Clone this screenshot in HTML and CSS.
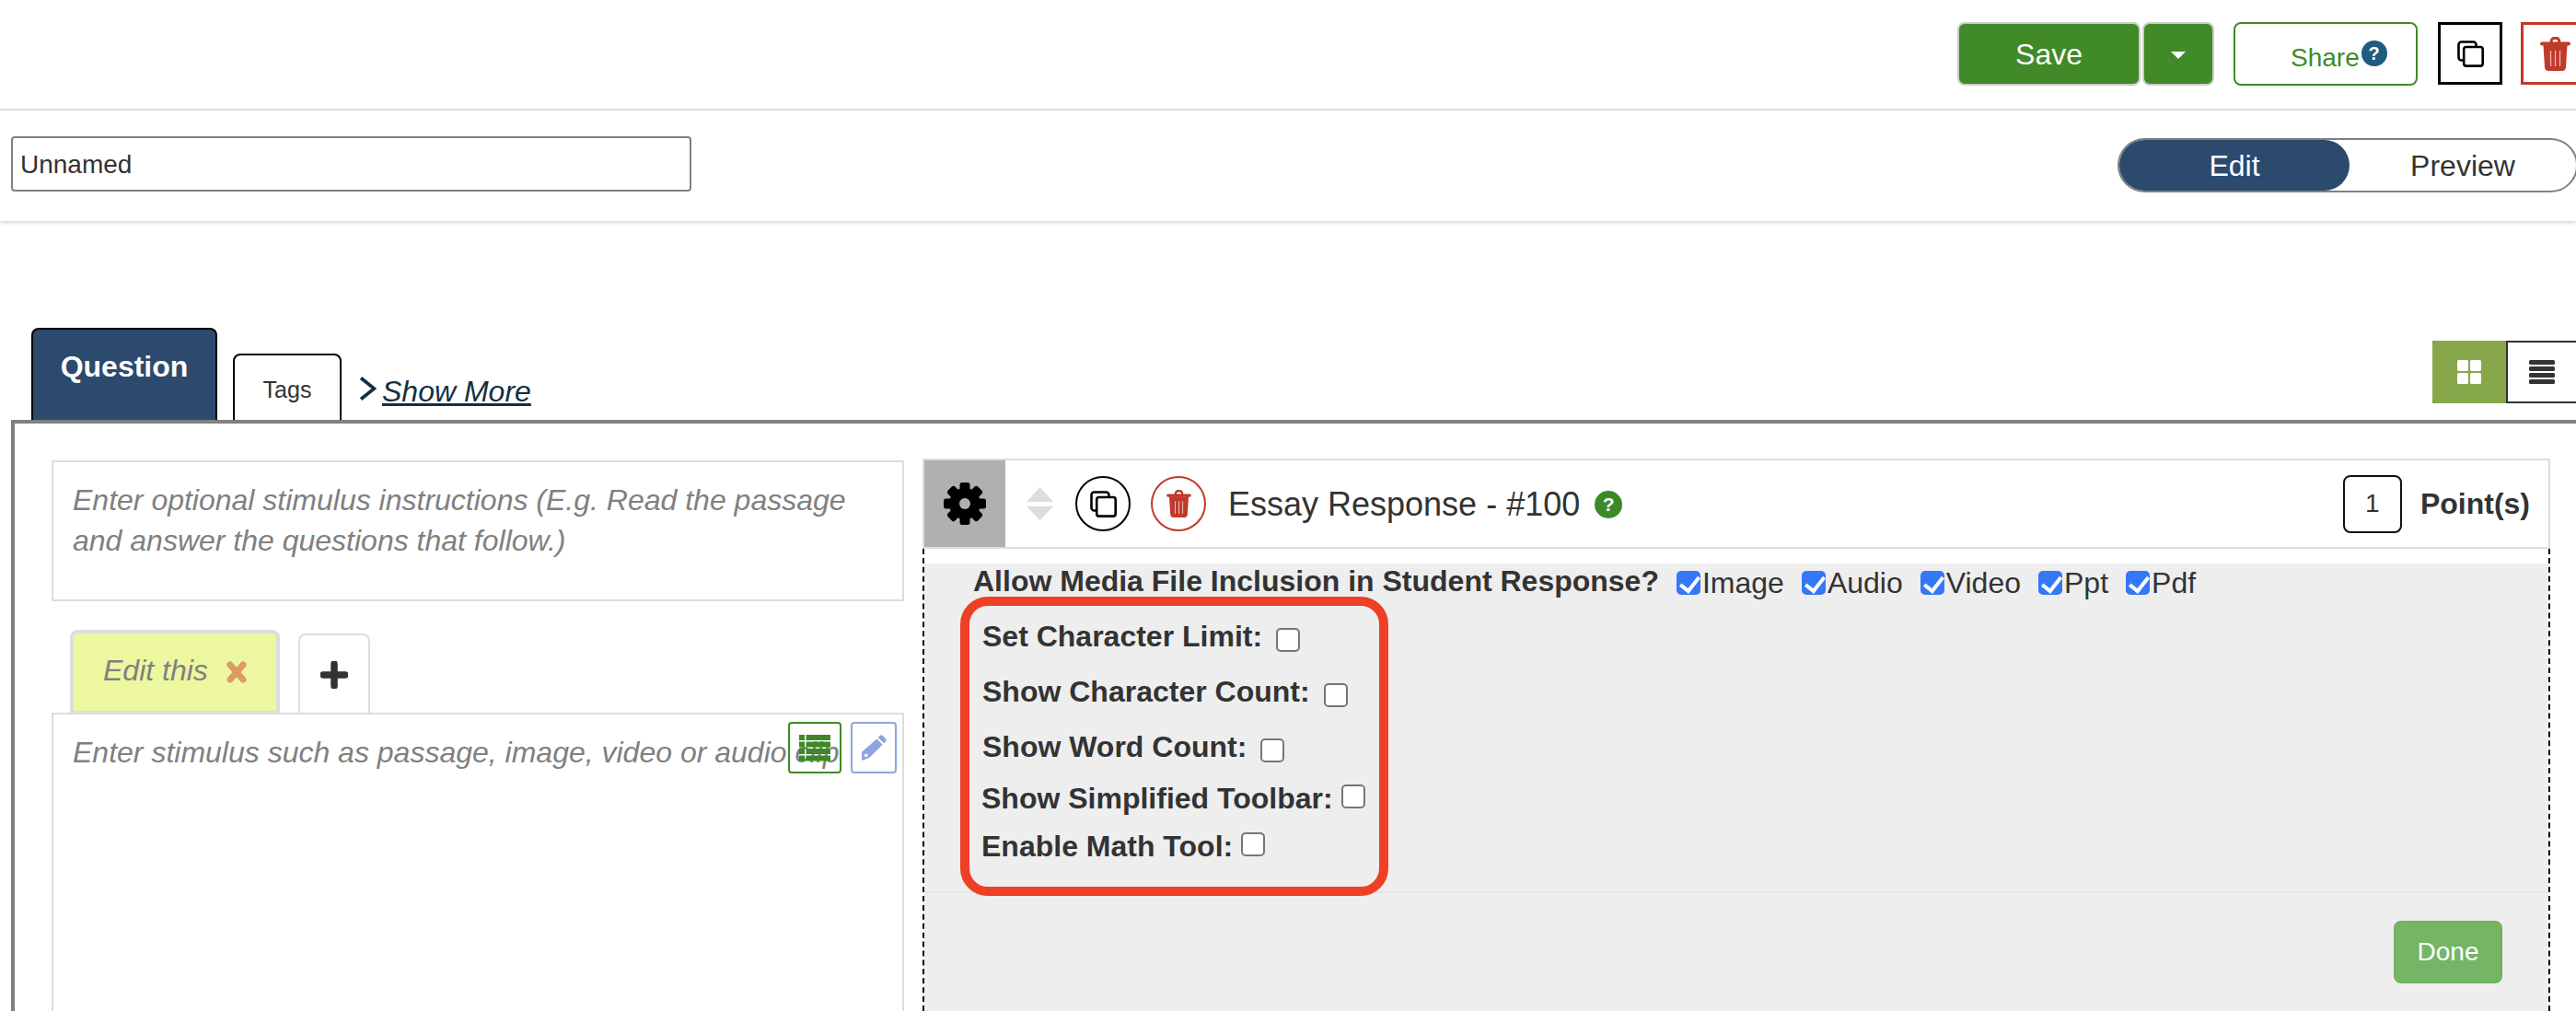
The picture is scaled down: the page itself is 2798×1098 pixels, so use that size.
FILE: index.html
```html
<!DOCTYPE html>
<html lang="en">
<head>
<meta charset="utf-8">
<title>Essay Response</title>
<link rel="stylesheet" href="styles.css">
</head>
<body>
<svg class="defs" width="0" height="0" aria-hidden="true">
  <symbol id="i-copy" viewBox="0 0 29 29">
    <path d="M7 21.500H4.500a3 3 0 0 1-3-3V4.500a3 3 0 0 1 3-3h13a3 3 0 0 1 3 3V7" fill="none" stroke="currentColor" stroke-width="2.600"/>
    <rect x="7.200" y="7" width="20.500" height="20.600" rx="2.600" fill="none" stroke="currentColor" stroke-width="2.600"/>
  </symbol>
  <symbol id="i-trash" viewBox="0 0 33 37">
    <path fill="currentColor" fill-rule="evenodd" d="M10.500 5.500C10.800 2 12.500 0 15 0h3c2.500 0 4.200 2 4.500 5.500h8.500a2 2 0 0 1 0 4H2a2 2 0 0 1 0-4zM13.500 5.500h6C19.300 3.800 18.800 3 18 3h-3c-.8 0-1.300.8-1.500 2.500z"/>
    <path fill="currentColor" d="M3.500 9h26L28 33c-.2 2.500-1.800 4-4 4H9c-2.200 0-3.800-1.500-4-4z"/>
    <path fill="#fff" fill-opacity=".65" d="M10.900 15h1.300v17h-1.300zM15.900 15h1.300v17h-1.300zM20.900 15h1.300v17h-1.300z"/>
  </symbol>
</svg>

<header class="toolbar">
  <button class="btn-save">Save</button>
  <button class="btn-caret"><span class="caret"></span></button>
  <button class="btn-share">Share<span class="help help-blue">?</span></button>
  <button class="btn-square btn-copy"><svg class="icon-copy"><use href="#i-copy"/></svg></button>
  <button class="btn-square btn-trash"><svg class="icon-trash-lg"><use href="#i-trash"/></svg></button>
</header>

<section class="namebar">
  <input class="name-input" type="text" value="Unnamed">
  <div class="mode-toggle">
    <span class="mode mode-on">Edit</span>
    <span class="mode">Preview</span>
  </div>
</section>

<nav class="tabbar">
  <div class="tab tab-question">Question</div>
  <div class="tab tab-tags">Tags</div>
  <svg class="chevron" viewBox="0 0 19 26"><path d="M2 1.500 16.500 13 2 24.500" fill="none" stroke="#12303f" stroke-width="3.600"/></svg>
  <a class="show-more" href="#">Show More</a>
  <div class="view-toggle">
    <button class="view view-grid">
      <svg class="icon-grid" viewBox="0 0 26 26"><rect width="12" height="12" rx="1.500"/><rect x="14" width="12" height="12" rx="1.500"/><rect y="14" width="12" height="12" rx="1.500"/><rect x="14" y="14" width="12" height="12" rx="1.500"/></svg>
    </button>
    <button class="view view-list">
      <svg class="icon-list" viewBox="0 0 28 26"><rect width="28" height="5" rx="1.500"/><rect y="7" width="28" height="5" rx="1.500"/><rect y="14" width="28" height="5" rx="1.500"/><rect y="21" width="28" height="5" rx="1.500"/></svg>
    </button>
  </div>
</nav>

<main class="frame">
  <div class="stimulus">
    <div class="box box-instructions">Enter optional stimulus instructions (E.g. Read the passage and answer the questions that follow.)</div>
    <div class="stim-tabs">
      <div class="stim-tab">Edit this
        <svg class="icon-x" viewBox="0 0 24 24"><path d="M5 4l14 16M19 4 5 20" fill="none" stroke="#dd9a66" stroke-width="7" stroke-linecap="round"/></svg>
      </div>
      <div class="stim-add">
        <svg class="icon-plus" viewBox="0 0 30 30"><path d="M15 3v24M3 15h24" fill="none" stroke="#333" stroke-width="7.500" stroke-linecap="round"/></svg>
      </div>
    </div>
    <div class="box box-stimulus">
      Enter stimulus such as passage, image, video or audio clip
      <button class="overlay-btn overlay-table">
        <svg class="icon-table" viewBox="0 0 34 29">
          <rect width="6" height="6"/><rect x="7.500" width="26.500" height="6"/>
          <rect y="7.500" width="6" height="6"/><rect x="7.500" y="7.500" width="26.500" height="6"/>
          <rect y="15" width="6" height="6"/><rect x="7.500" y="15" width="26.500" height="6"/>
          <rect y="22.500" width="6" height="6"/><rect x="7.500" y="22.500" width="26.500" height="6"/>
        </svg>
      </button>
      <button class="overlay-btn overlay-pencil">
        <svg class="icon-pencil" viewBox="0 0 28 28"><path d="M20.500 1.200a2.500 2.500 0 0 1 3.500 0l2.800 2.800a2.500 2.500 0 0 1 0 3.500L25 9.300 18.700 3zM17.300 4.400l6.300 6.300L9.500 24.800 1 28V18.700zM4.500 21a1.500 1.500 0 1 0 2.500 2.500A1.500 1.500 0 0 0 4.500 21z" fill-rule="evenodd"/></svg>
      </button>
    </div>
  </div>

  <div class="question">
    <div class="q-head">
      <div class="q-gear">
        <svg class="icon-gear" viewBox="0 0 46 46">
          <g>
            <rect x="17.500" y="0" width="11" height="46" rx="2.500"/>
            <rect x="17.500" y="0" width="11" height="46" rx="2.500" transform="rotate(45 23 23)"/>
            <rect x="17.500" y="0" width="11" height="46" rx="2.500" transform="rotate(90 23 23)"/>
            <rect x="17.500" y="0" width="11" height="46" rx="2.500" transform="rotate(135 23 23)"/>
            <circle cx="23" cy="23" r="17"/>
          </g>
          <circle class="gear-hole" cx="23" cy="23" r="6"/>
        </svg>
      </div>
      <svg class="icon-sort" viewBox="0 0 29 36"><path d="M14.500 0 29 16H0zM0 21h29L14.500 36z"/></svg>
      <span class="round round-copy"><svg class="icon-copy"><use href="#i-copy"/></svg></span>
      <span class="round round-trash"><svg class="icon-trash"><use href="#i-trash"/></svg></span>
      <h1 class="q-title">Essay Response - #100</h1>
      <span class="help help-green">?</span>
      <div class="points-box">1</div>
      <strong class="points-label">Point(s)</strong>
    </div>
    <div class="settings">
      <div class="settings-body">
        <div class="media-row">
          <strong class="media-title">Allow Media File Inclusion in Student Response?</strong>
          <label class="media"><input class="check" type="checkbox" checked>Image</label>
          <label class="media"><input class="check" type="checkbox" checked>Audio</label>
          <label class="media"><input class="check" type="checkbox" checked>Video</label>
          <label class="media"><input class="check" type="checkbox" checked>Ppt</label>
          <label class="media"><input class="check" type="checkbox" checked>Pdf</label>
        </div>
        <div class="options">
          <label class="opt"><b>Set Character Limit:</b><input class="check check-low" type="checkbox"></label>
          <label class="opt"><b>Show Character Count:</b><input class="check check-low" type="checkbox"></label>
          <label class="opt"><b>Show Word Count:</b><input class="check check-low" type="checkbox"></label>
          <label class="opt opt-tight"><b>Show Simplified Toolbar:</b><input class="check check-high" type="checkbox"></label>
          <label class="opt opt-tight"><b>Enable Math Tool:</b><input class="check check-high" type="checkbox"></label>
        </div>
        <div class="footer"><button class="btn-done">Done</button></div>
        <div class="highlight"></div>
      </div>
    </div>
  </div>
</main>
</body>
</html>
```

FILE: styles.css
```css
* { box-sizing: border-box; }
html, body {
  margin: 0;
  width: 2798px;
  height: 1098px;
  overflow: hidden;
  background: #fff;
  color: #333;
  font-family: "Liberation Sans", Arial, sans-serif;
}
button { font-family: inherit; padding: 0; cursor: pointer; }
.defs { position: absolute; }

/* top toolbar */
.toolbar {
  display: flex;
  justify-content: flex-end;
  align-items: flex-start;
  height: 120px;
  padding-top: 24px;
  border-bottom: 2px solid #ddd;
}
.toolbar > * { flex: none; }
.btn-save, .btn-caret {
  height: 69px;
  background: #408a28;
  border: 2px solid #ccc;
  border-radius: 8px;
  color: #fff;
}
.btn-save { width: 199px; padding-top: 2px; font-size: 32px; }
.btn-caret {
  width: 78px;
  margin-left: 2px;
  display: flex;
  align-items: center;
  justify-content: center;
}
.caret {
  margin-top: 2px;
  border-left: 8px solid transparent;
  border-right: 8px solid transparent;
  border-top: 8px solid #fff;
}
.btn-share {
  width: 200px;
  height: 69px;
  margin-left: 21px;
  padding: 21px 0 0 60px;
  display: flex;
  align-items: flex-start;
  background: #fff;
  border: 2px solid #408a28;
  border-radius: 8px;
  color: #408a28;
  font-size: 28px;
  line-height: 32px;
}
.help {
  display: inline-flex;
  align-items: center;
  justify-content: center;
  border-radius: 50%;
  color: #fff;
  font-weight: 700;
  flex: none;
}
.help-blue {
  width: 28px;
  height: 28px;
  margin: -3px 0 0 2px;
  background: #1f5a80;
  font-size: 20px;
  line-height: 28px;
}
.btn-square {
  width: 70px;
  height: 68px;
  background: #fff;
  border: 3px solid #000;
  display: flex;
  align-items: center;
  justify-content: center;
}
.btn-copy { margin-left: 22px; color: #000; }
.btn-trash {
  margin: 0 -10px 0 20px;
  border-color: #c0392b;
  color: #c0392b;
  justify-content: flex-start;
  padding-left: 18px;
}
.icon-copy { width: 29px; height: 29px; fill: none; }
.icon-trash-lg { width: 33px; height: 37px; }
.icon-trash { width: 27px; height: 30px; }

/* name bar */
.namebar {
  display: flex;
  justify-content: space-between;
  align-items: flex-start;
  height: 120px;
  padding: 28px 0 0 12px;
  box-shadow: 0 2px 4px rgba(0, 0, 0, .16);
}
.name-input {
  width: 739px;
  height: 60px;
  padding: 2px 8px 0;
  border: 2px solid #808080;
  border-radius: 4px;
  color: #333;
  font: 28px "Liberation Sans", Arial, sans-serif;
  outline: none;
}
.mode-toggle {
  display: flex;
  width: 500px;
  height: 59px;
  margin: 2px -2px 0 0;
  border: 2px solid #808080;
  border-radius: 30px;
  font-size: 32px;
}
.mode {
  flex: 1;
  display: flex;
  align-items: center;
  justify-content: center;
  padding-top: 2px;
  border-radius: 30px;
  color: #333;
}
.mode-on { flex: 0 0 250px; background: #2c4a6e; color: #fff; }

/* tab bar */
.tabbar {
  display: flex;
  align-items: flex-end;
  height: 216px;
  padding-left: 34px;
}
.tab {
  border: 2px solid #000;
  border-bottom: 0;
  border-radius: 8px 8px 0 0;
  text-align: center;
}
.tab-question {
  width: 202px;
  height: 100px;
  padding-top: 20px;
  background: #2c4a6e;
  color: #fff;
  font-size: 32px;
  font-weight: 700;
  line-height: 40px;
}
.tab-tags {
  width: 118px;
  height: 72px;
  margin-left: 17px;
  padding-top: 22px;
  font-size: 25px;
  line-height: 30px;
}
.chevron { width: 19px; height: 26px; margin: 0 0 21px 19px; flex: none; }
.show-more {
  margin: 0 0 13px 6px;
  color: #12303f;
  font-size: 32px;
  font-style: italic;
  line-height: 36px;
}
.view-toggle {
  display: flex;
  margin: 0 -4px 18px auto;
}
.view {
  display: flex;
  align-items: center;
  justify-content: center;
  width: 80px;
  height: 68px;
  border: 0;
}
.view-grid { background: #86a84a; }
.view-list { background: #fff; border: 2px solid #333; padding-right: 2px; }
.icon-grid { width: 26px; height: 26px; fill: #fff; }
.icon-list { width: 28px; height: 26px; fill: #333; }

/* main frame */
.frame {
  display: flex;
  align-items: stretch;
  gap: 20px;
  height: 642px;
  margin-left: 12px;
  padding: 38px 0 0 40px;
  border-top: 4px solid #808080;
  border-left: 4px solid #808080;
  overflow: hidden;
}
.stimulus {
  flex: 0 0 926px;
  padding-top: 2px;
  color: #808080;
  font-size: 32px;
  font-style: italic;
  line-height: 44px;
}
.box { border: 2px solid #ddd; background: #fff; }
.box-instructions { height: 153px; padding: 19px 20px 0 21px; }
.stim-tabs {
  display: flex;
  align-items: flex-end;
  gap: 20px;
  height: 121px;
  padding-left: 20px;
}
.stim-tab {
  width: 228px;
  height: 90px;
  padding: 20px 0 0 32px;
  display: flex;
  align-items: flex-start;
  background: #ecf7a0;
  border: 4px solid #ddd;
  border-bottom-width: 2px;
  border-radius: 8px 8px 0 0;
  line-height: 40px;
}
.icon-x { width: 24px; height: 24px; margin: 10px 0 0 19px; flex: none; }
.stim-add {
  display: flex;
  justify-content: center;
  width: 78px;
  height: 86px;
  padding-top: 28px;
  border: 2px solid #ddd;
  border-bottom: 0;
  border-radius: 8px 8px 0 0;
}
.icon-plus { width: 30px; height: 30px; }
.box-stimulus {
  position: relative;
  height: 400px;
  padding: 19px 0 0 21px;
  white-space: nowrap;
}
.overlay-btn {
  position: absolute;
  top: 8px;
  display: flex;
  align-items: center;
  justify-content: center;
  height: 56px;
  background: transparent;
  border: 2px solid;
  border-radius: 4px;
}
.overlay-table { left: 798px; width: 58px; border-color: #3c8a26; }
.overlay-pencil { left: 866px; width: 50px; border-color: #8fa3e0; }
.icon-table { width: 34px; height: 29px; fill: #3c8a26; }
.icon-pencil { width: 28px; height: 28px; fill: #8fa3e0; }

/* question panel */
.question {
  flex: 0 0 1768px;
  display: flex;
  flex-direction: column;
}
.q-head {
  flex: none;
  display: flex;
  align-items: center;
  height: 98px;
  padding-right: 20px;
  border: 2px solid #ddd;
}
.q-gear {
  align-self: stretch;
  display: flex;
  align-items: center;
  justify-content: center;
  width: 88px;
  background: #b0b0b0;
}
.icon-gear { width: 46px; height: 46px; fill: #000; }
.gear-hole { fill: #b0b0b0; }
.icon-sort { width: 29px; height: 36px; margin-left: 23px; fill: #ddd; }
.round {
  display: flex;
  align-items: center;
  justify-content: center;
  width: 60px;
  height: 60px;
  border: 2px solid #000;
  border-radius: 50%;
  flex: none;
}
.round-copy { margin-left: 24px; color: #000; }
.round-trash { margin-left: 22px; border-color: #c0392b; color: #c0392b; }
.q-title {
  margin: 2px 0 0 24px;
  color: #333;
  font-size: 36px;
  font-weight: 400;
}
.help-green {
  width: 30px;
  height: 30px;
  margin: 2px 0 0 16px;
  background: #3c8a26;
  font-size: 21px;
}
.points-box {
  display: flex;
  align-items: center;
  justify-content: center;
  width: 64px;
  height: 63px;
  margin-left: auto;
  border: 2px solid #111;
  border-radius: 8px;
  font-size: 28px;
}
.points-label { margin-left: 20px; font-size: 32px; }

.settings {
  flex: 1;
  display: flex;
  padding-top: 16px;
  border-left: 2px dashed #000;
  border-right: 2px dashed #000;
}
.settings-body {
  position: relative;
  flex: 1;
  background: #eee;
}
.media-row {
  display: flex;
  align-items: center;
  height: 40px;
  padding-left: 53px;
  font-size: 32px;
}
.media-title { margin: -2px 19px 0 0; }
.media { display: flex; align-items: center; margin: 2px 19px 0 0; }
.check {
  appearance: none;
  position: relative;
  flex: none;
  width: 26px;
  height: 26px;
  margin: 0 2px 0 0;
  background: #fff;
  border: 2px solid #767676;
  border-radius: 5px;
}
.check:checked { background: #3478f6; border-color: #3478f6; }
.check:checked::after {
  content: "";
  position: absolute;
  left: 6px;
  top: 0;
  width: 9px;
  height: 17px;
  border-right: 4px solid #fff;
  border-bottom: 4px solid #fff;
  transform: rotate(38deg);
}
.options { padding: 9px 0 0 63px; height: 316px; }
.opt {
  display: flex;
  align-items: center;
  height: 60px;
  font-size: 32px;
}
.opt b { line-height: 40px; }
.opt .check-low { margin: 8px 0 0 15px; }
.opt-tight { height: 52px; margin-left: -1px; }
.opt .check-high { margin: -4px 0 0 9px; }
.footer {
  display: flex;
  justify-content: flex-end;
  padding: 30px 50px 0 0;
  border-top: 2px solid #e5e5e5;
}
.btn-done {
  width: 118px;
  height: 68px;
  background: #74b566;
  border: 2px solid #6fb062;
  border-radius: 8px;
  color: #fff;
  font-size: 28px;
}
.highlight {
  position: absolute;
  left: 39px;
  top: 36px;
  width: 465px;
  height: 325px;
  border: 10px solid #ee4025;
  border-radius: 30px;
  pointer-events: none;
}
```
